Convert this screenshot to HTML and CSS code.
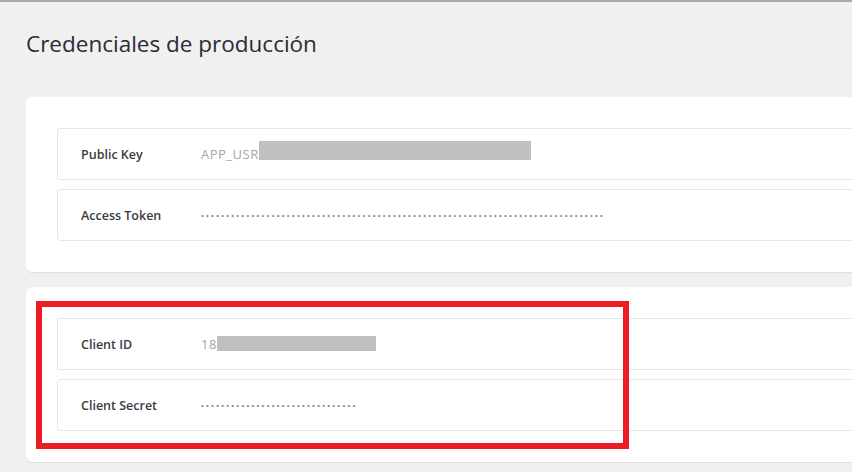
FILE: index.html
```html
<!DOCTYPE html>
<html lang="es">
<head>
  <meta charset="UTF-8" />
  <meta name="viewport" content="width=device-width, initial-scale=1.0" />
  <title>Credenciales de producción</title>
  <link rel="stylesheet" href="styles.css">
</head>
<body>
  <div class="page">
    <h1>Credenciales de producción</h1>

    <!-- Public key / access token -->
    <div class="card">
      <div class="row">
        <span class="label">Public Key</span>
        <span class="value">APP_USR</span><span class="redacted wide"></span>
      </div>
      <div class="row">
        <span class="label">Access Token</span>
        <span class="value dots">••••••••••••••••••••••••••••••••••••••••••••••••••••••••••••••••••••••••••••••••</span>
      </div>
    </div>

    <!-- Client id / secret -->
    <div class="card marked">
      <div class="row">
        <span class="label">Client ID</span>
        <span class="value">18</span><span class="redacted short"></span>
      </div>
      <div class="row">
        <span class="label">Client Secret</span>
        <span class="value dots">•••••••••••••••••••••••••••••••</span>
      </div>
      <div class="highlight"></div>
    </div>
  </div>
</body>
</html>
```

FILE: styles.css
```css
* {
  box-sizing: border-box;
}

body {
  font-family: "Open Sans", "Liberation Sans", Arial, sans-serif;
  margin: 0;
  background-color: #f0f0f0;
  border-top: 2px solid #a8a8a8;
  min-height: 472px;
}

/* the cards run on past the right edge of the window */
.page {
  overflow: hidden;
  padding: 27px 0 0 26px;
}

h1 {
  font-size: 22.5px;
  font-weight: 400;
  line-height: 30px;
  color: #2b2b33;
  margin: 0 0 38px;
}

.card {
  background-color: #fff;
  border-radius: 6px;
  box-shadow: 0 1px 1px rgba(0, 0, 0, 0.08);
  padding: 31px 0 31px 31px;
  margin: 0 -40px 15px 0;
  display: flex;
  flex-direction: column;
  gap: 9px;
}

.marked {
  position: relative;
}

.row {
  height: 52px;
  border: 1px solid #e6e6e6;
  border-radius: 3px;
  display: flex;
  align-items: center;
  padding-left: 23px;
}

.label {
  width: 120px;
  font-size: 12.5px;
  font-weight: 600;
  color: #3a3a44;
}

.value {
  font-size: 13px;
  letter-spacing: 0.5px;
  color: #a6a6a6;
}

.dots {
  font-family: "Liberation Sans", Arial, sans-serif;
  font-size: 8px;
  letter-spacing: 2.25px;
  color: #8c8c8c;
}

.redacted {
  background-color: #c0c0c0;
  display: inline-block;
}

.wide {
  width: 272px;
  height: 19px;
  margin-top: -8px;
}

.short {
  width: 159px;
  height: 15px;
  margin-top: -2px;
}

/* red annotation box drawn over the screenshot */
.highlight {
  position: absolute;
  left: 10px;
  top: 14px;
  width: 593px;
  height: 148px;
  border: 6px solid #ed1c24;
}
```
